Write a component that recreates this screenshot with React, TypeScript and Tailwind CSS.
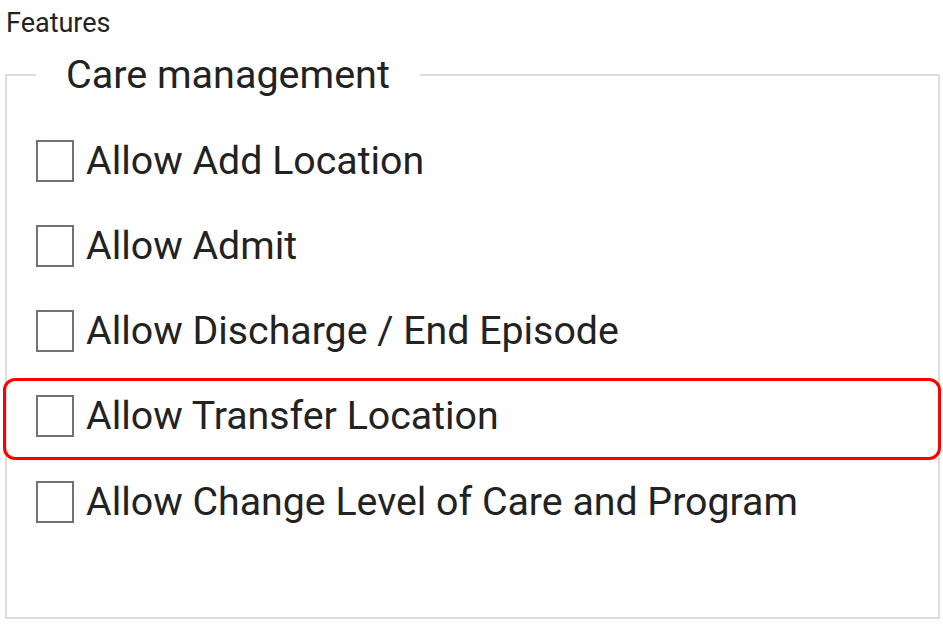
import React from "react";

const items = [
  "Allow Add Location",
  "Allow Admit",
  "Allow Discharge / End Episode",
  "Allow Transfer Location",
  "Allow Change Level of Care and Program",
];

export default function App() {
  return (
    <div
      className="w-[943px] h-[626px] bg-white text-[#222222] overflow-hidden"
      style={{ fontFamily: "Roboto, 'Noto Sans', sans-serif" }}
    >
      <div className="pt-[10px] pl-[6px] text-[27px] leading-[26px]">Features</div>
      <fieldset className="mt-[19px] ml-[5px] mr-[3px] border-2 border-[#dcdcdc] pb-[73px] min-w-0">
        <legend className="ml-[29px] px-[30px] text-[39.5px] leading-[40px]">Care management</legend>
        <div className="pt-[23px]">
          {items.map((label, i) => (
            <div key={label} className="relative h-[85.25px] flex items-center pl-[29px]">
              <span className="w-[38px] h-[42px] border-2 border-[#6d737d] bg-white shrink-0" />
              <span className="ml-[12px] text-[39.3px] leading-[40px] whitespace-nowrap">{label}</span>
              {i === 3 && (
                <span className="absolute -left-[4px] -right-[3px] top-[4px] h-[82px] border-[3px] border-[#ff0000] rounded-[12px] pointer-events-none" />
              )}
            </div>
          ))}
        </div>
      </fieldset>
    </div>
  );
}
